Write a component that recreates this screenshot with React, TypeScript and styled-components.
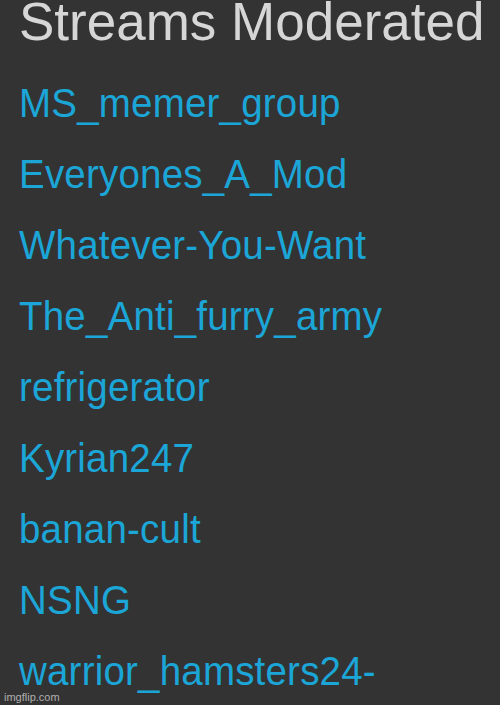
import React from 'react';
import styled, { createGlobalStyle } from 'styled-components';

const GlobalStyle = createGlobalStyle`
  html, body {
    margin: 0;
    padding: 0;
    background: #333333;
  }
  body {
    font-family: "Liberation Sans", Arial, sans-serif;
  }
`;

const Panel = styled.div`
  position: relative;
  width: 500px;
  height: 705px;
  background: #333333;
  overflow: hidden;
  padding: 0 0 0 19px;
  box-sizing: border-box;
`;

const Heading = styled.h2`
  margin: -4px 0 0;
  font-weight: normal;
  font-size: 53px;
  line-height: 52px;
  color: #d6d6d6;
`;

const StreamList = styled.ul`
  list-style: none;
  margin: 0;
  padding: 19px 0 0;
  display: flex;
  flex-direction: column;
`;

const StreamItem = styled.li`
  height: 71px;
  display: flex;
  align-items: center;
`;

const StreamLink = styled.a`
  display: inline-block;
  font-size: 38.5px;
  letter-spacing: 0.2px;
  color: #1ba6d7;
  text-decoration: none;
  transform: scaleY(1.06);
`;

const Watermark = styled.span`
  position: absolute;
  left: 4px;
  bottom: 2px;
  font-size: 11px;
  color: #b0b0b0;
`;

const streams = [
  'MS_memer_group',
  'Everyones_A_Mod',
  'Whatever-You-Want',
  'The_Anti_furry_army',
  'refrigerator',
  'Kyrian247',
  'banan-cult',
  'NSNG',
  'warrior_hamsters24-',
];

export default function App() {
  return (
    <>
      <GlobalStyle />
      <Panel>
        <Heading>Streams Moderated</Heading>
        <StreamList>
          {streams.map((name) => (
            <StreamItem key={name}>
              <StreamLink href="#">{name}</StreamLink>
            </StreamItem>
          ))}
        </StreamList>
        <Watermark>imgflip.com</Watermark>
      </Panel>
    </>
  );
}
